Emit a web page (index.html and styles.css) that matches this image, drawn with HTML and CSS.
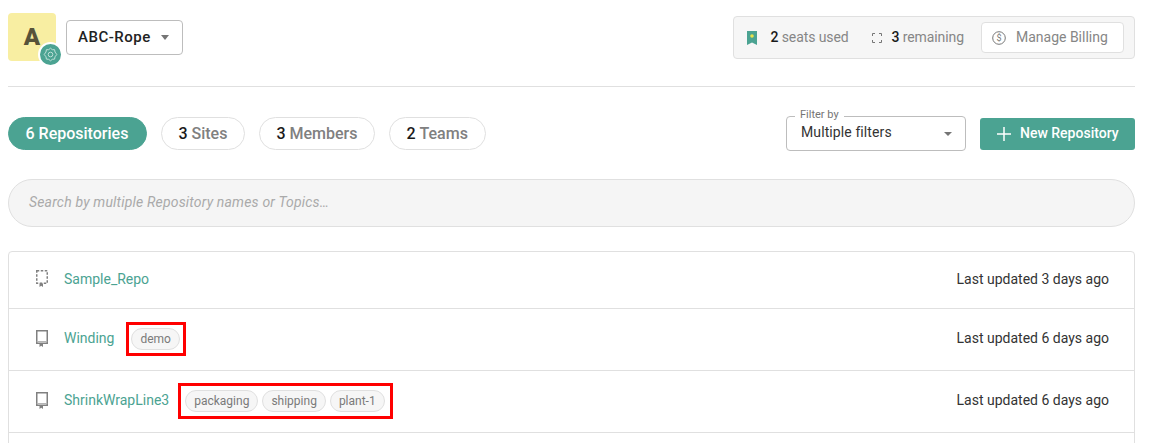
FILE: index.html
```html
<!DOCTYPE html>
<html lang="en">
<head>
<meta charset="utf-8">
<title>Repositories</title>
<link rel="stylesheet" href="styles.css">
</head>
<body>
<header class="top">
  <div class="org">
    <div class="avatar">A
      <span class="gear"><svg width="15" height="15" viewBox="0 0 15 15" fill="none" stroke="#bfe0d8" stroke-width="1"><circle cx="7.500" cy="7.500" r="2.300"/><path d="M7.500 1.200l1.800 1.500 2.300 0 .4 2.300 1.800 2.500-1.800 2.300-.4 2.300-2.300.2-1.800 1.500-1.800-1.500-2.300-.2-.4-2.300-1.800-2.300 1.800-2.500.4-2.300 2.300 0z"/></svg></span>
    </div>
    <button class="org-select">ABC-Rope<span class="caret"></span></button>
  </div>
  <div class="billing">
    <svg class="seat-icon" width="10" height="14" viewBox="0 0 10 14"><path d="M0 0h10v14L5 11.500 0 14z" fill="#4ba392"/><circle cx="5" cy="5" r="1.800" fill="#e8e34a"/></svg>
    <span class="stat"><b>2</b> seats used</span>
    <svg class="free-icon" width="10" height="10" viewBox="0 0 10 10" fill="none" stroke="#777" stroke-width="1"><path d="M.5 3V.5H3M7 .5h2.500V3M9.500 7v2.500H7M3 9.500H.5V7"/></svg>
    <span class="stat"><b>3</b> remaining</span>
    <button class="manage">
      <svg width="14" height="14" viewBox="0 0 14 14"><circle cx="7" cy="7" r="6.300" fill="none" stroke="#777" stroke-width="1"/><text x="7" y="10" text-anchor="middle" class="dollar">$</text></svg>
      Manage Billing
    </button>
  </div>
</header>
<hr class="rule">
<nav class="toolbar">
  <div class="tabs">
    <a class="tab active"><b>6</b> Repositories</a>
    <a class="tab"><b>3</b> Sites</a>
    <a class="tab"><b>3</b> Members</a>
    <a class="tab"><b>2</b> Teams</a>
  </div>
  <div class="actions">
    <div class="filter">
      <span class="filter-label">Filter by</span>
      <span class="filter-value">Multiple filters</span><span class="caret"></span>
    </div>
    <button class="new-repo"><svg width="14" height="14" viewBox="0 0 14 14" stroke="#fff" stroke-width="1.500"><path d="M7 0v14M0 7h14"/></svg>New Repository</button>
  </div>
</nav>
<div class="search">Search by multiple Repository names or Topics…</div>
<ul class="repos">
  <li class="repo">
    <svg class="repo-icon" width="12" height="17" viewBox="0 0 12 17" fill="none" stroke="#808080" stroke-width="1.500"><path stroke-dasharray="2.500 1.500" d="M.75.75h10.500v12.500H.75z"/><path d="M3.500 13.500V17l1.700-1.300L7 17v-3.500z" fill="#808080" stroke="none"/></svg>
    <a class="name">Sample_Repo</a>
    <span class="updated">Last updated 3 days ago</span>
  </li>
  <li class="repo">
    <svg class="repo-icon" width="12" height="17" viewBox="0 0 12 17" fill="none" stroke="#808080" stroke-width="1.500"><path d="M.75.75h10.500v12.500H.75z"/><path d="M.75 11.500h10.500" stroke-width="1" stroke="#b5b5b5"/><path d="M3.500 13.500V17l1.700-1.300L7 17v-3.500z" fill="#808080" stroke="none"/></svg>
    <a class="name">Winding</a>
    <span class="marked"><span class="topic">demo</span></span>
    <span class="updated">Last updated 6 days ago</span>
  </li>
  <li class="repo">
    <svg class="repo-icon" width="12" height="17" viewBox="0 0 12 17" fill="none" stroke="#808080" stroke-width="1.500"><path d="M.75.75h10.500v12.500H.75z"/><path d="M.75 11.500h10.500" stroke-width="1" stroke="#b5b5b5"/><path d="M3.500 13.500V17l1.700-1.300L7 17v-3.500z" fill="#808080" stroke="none"/></svg>
    <a class="name">ShrinkWrapLine3</a>
    <span class="marked wide"><span class="topic">packaging</span><span class="topic">shipping</span><span class="topic">plant-1</span></span>
    <span class="updated">Last updated 6 days ago</span>
  </li>
  <li class="repo"></li>
</ul>
</body>
</html>
```
FILE: styles.css
```css
* { box-sizing: border-box; }
html, body { height: 443px; overflow: hidden; }
body { margin: 0; padding: 13px 15px 0 8px; background: #fff; font-family: Roboto, sans-serif; color: #1f1f1f; }
button { font-family: inherit; cursor: pointer; }
b { font-weight: 500; color: #1a1a1a; }
.top { display: flex; justify-content: space-between; height: 73px; }
.org { display: flex; align-items: flex-start; }
.avatar { position: relative; width: 48px; height: 48px; border-radius: 4px; background: #f8eea2; color: #57533a; font-size: 24px; font-weight: 900; display: flex; align-items: center; justify-content: center; }
.gear { position: absolute; left: 30px; top: 29px; width: 25px; height: 25px; border-radius: 50%; background: #4ba392; border: 2px solid #fff; display: flex; align-items: center; justify-content: center; }
.org-select { margin: 7px 0 0 10px; width: 117px; height: 35px; border: 1px solid #bdbdbd; border-radius: 4px; background: #fff; font-size: 15px; font-weight: 500; letter-spacing: .5px; color: #222; display: flex; align-items: center; padding: 0 0 2px 11px; }
.caret { display: block; width: 0; height: 0; border-left: 4.500px solid transparent; border-right: 4.500px solid transparent; border-top: 5px solid #757575; }
.org-select .caret { margin: 2px 0 0 10px; }
.billing { margin-top: 3px; width: 402px; height: 43px; background: #f6f6f6; border: 1px solid #e0e0e0; border-radius: 4px; display: flex; align-items: center; padding-left: 13px; font-size: 14px; color: #868686; }
.stat { white-space: nowrap; letter-spacing: -.1px; margin-top: -2px; }
.seat-icon { margin-right: 13.500px; }
.free-icon { margin: 0 10px 0 23px; }
.manage { margin-left: 17px; width: 143px; height: 31px; background: #fff; border: 1px solid #e0e0e0; border-radius: 4px; font-size: 14px; color: #868686; display: flex; align-items: center; gap: 10px; padding: 0 0 2px 10px; white-space: nowrap; }
.manage svg { margin-top: 2px; }
.dollar { font: 9px Roboto, sans-serif; fill: #777; }
.rule { margin: 0; border: 0; border-top: 1px solid #e0e0e0; }
.toolbar { display: flex; justify-content: space-between; align-items: flex-start; margin-top: 24px; }
.tabs { display: flex; gap: 14px; margin-top: 6px; }
.tab { height: 33px; padding: 0 16.500px; border: 1px solid #e0e0e0; border-radius: 17px; font-size: 16px; font-weight: 500; color: #808080; display: flex; align-items: center; gap: 4px; white-space: nowrap; }
.tab:last-child { padding-right: 17.500px; }
.tab.active { background: #4ba392; border-color: #4ba392; color: #fff; padding: 0 17.500px 0 16.500px; }
.tab.active b { color: #fff; }
.actions { display: flex; gap: 14px; }
.filter { position: relative; margin-top: 5px; padding: 0 13px 3px 14px; width: 180px; height: 35px; border: 1px solid #bdbdbd; border-radius: 4px; display: flex; align-items: center; justify-content: space-between; font-size: 14px; color: #333; }
.filter-value { letter-spacing: .1px; }
.filter-label { position: absolute; left: 8px; top: -8px; padding: 0 5px; background: #fff; font-size: 11px; line-height: 11px; color: #757575; }
.filter .caret { margin-top: 3px; border-left-width: 4px; border-right-width: 4px; border-top-width: 4.500px; }
.new-repo { margin-top: 7px; width: 155px; height: 32px; background: #4ba392; border: 0; border-radius: 3px; color: #fff; font-size: 14px; font-weight: 500; display: flex; align-items: center; gap: 9px; padding: 0 0 2px 17px; white-space: nowrap; }
.new-repo svg { margin-top: 2px; }
.search { margin-top: 28px; height: 48px; background: #f5f5f5; border: 1px solid #e0e0e0; border-radius: 24px; padding: 0 20px 2px; display: flex; align-items: center; font-size: 14px; font-style: italic; letter-spacing: .18px; color: #aaa; }
.repos { list-style: none; margin: 24px 0 0; padding: 0; border: 1px solid #e0e0e0; border-radius: 4px 4px 0 0; }
.repo { height: 62px; display: flex; align-items: center; padding: 0 25px 0 27px; border-bottom: 1px solid #e0e0e0; font-size: 14px; }
.repo:first-child { height: 57px; }
.repo:last-child { height: 10px; border-bottom: 0; }
.repo-icon { margin: -3px 16px 0 0; flex: none; }
.name { color: #4ba392; margin-top: -3px; }
.repo:first-child .name { margin-top: -2px; }
.marked { position: relative; display: flex; gap: 4px; margin: -1px 0 0 17px; }
.marked::before { content: ""; position: absolute; left: -5px; right: -6px; top: -6px; bottom: -6px; border: 3px solid #f00; }
.marked.wide { margin: -1px 0 0 16px; }
.marked.wide::before { left: -7px; right: -8px; top: -7px; bottom: -7px; }
.topic { height: 22px; padding: 0 8px; border: 1px solid #e0e0e0; border-radius: 11px; background: #f6f6f6; font-size: 12px; color: #7a7a7a; display: flex; align-items: center; }
.updated { margin-left: auto; color: #333; margin-top: -3px; }
.repo:first-child .updated { margin-top: -2px; }
```
